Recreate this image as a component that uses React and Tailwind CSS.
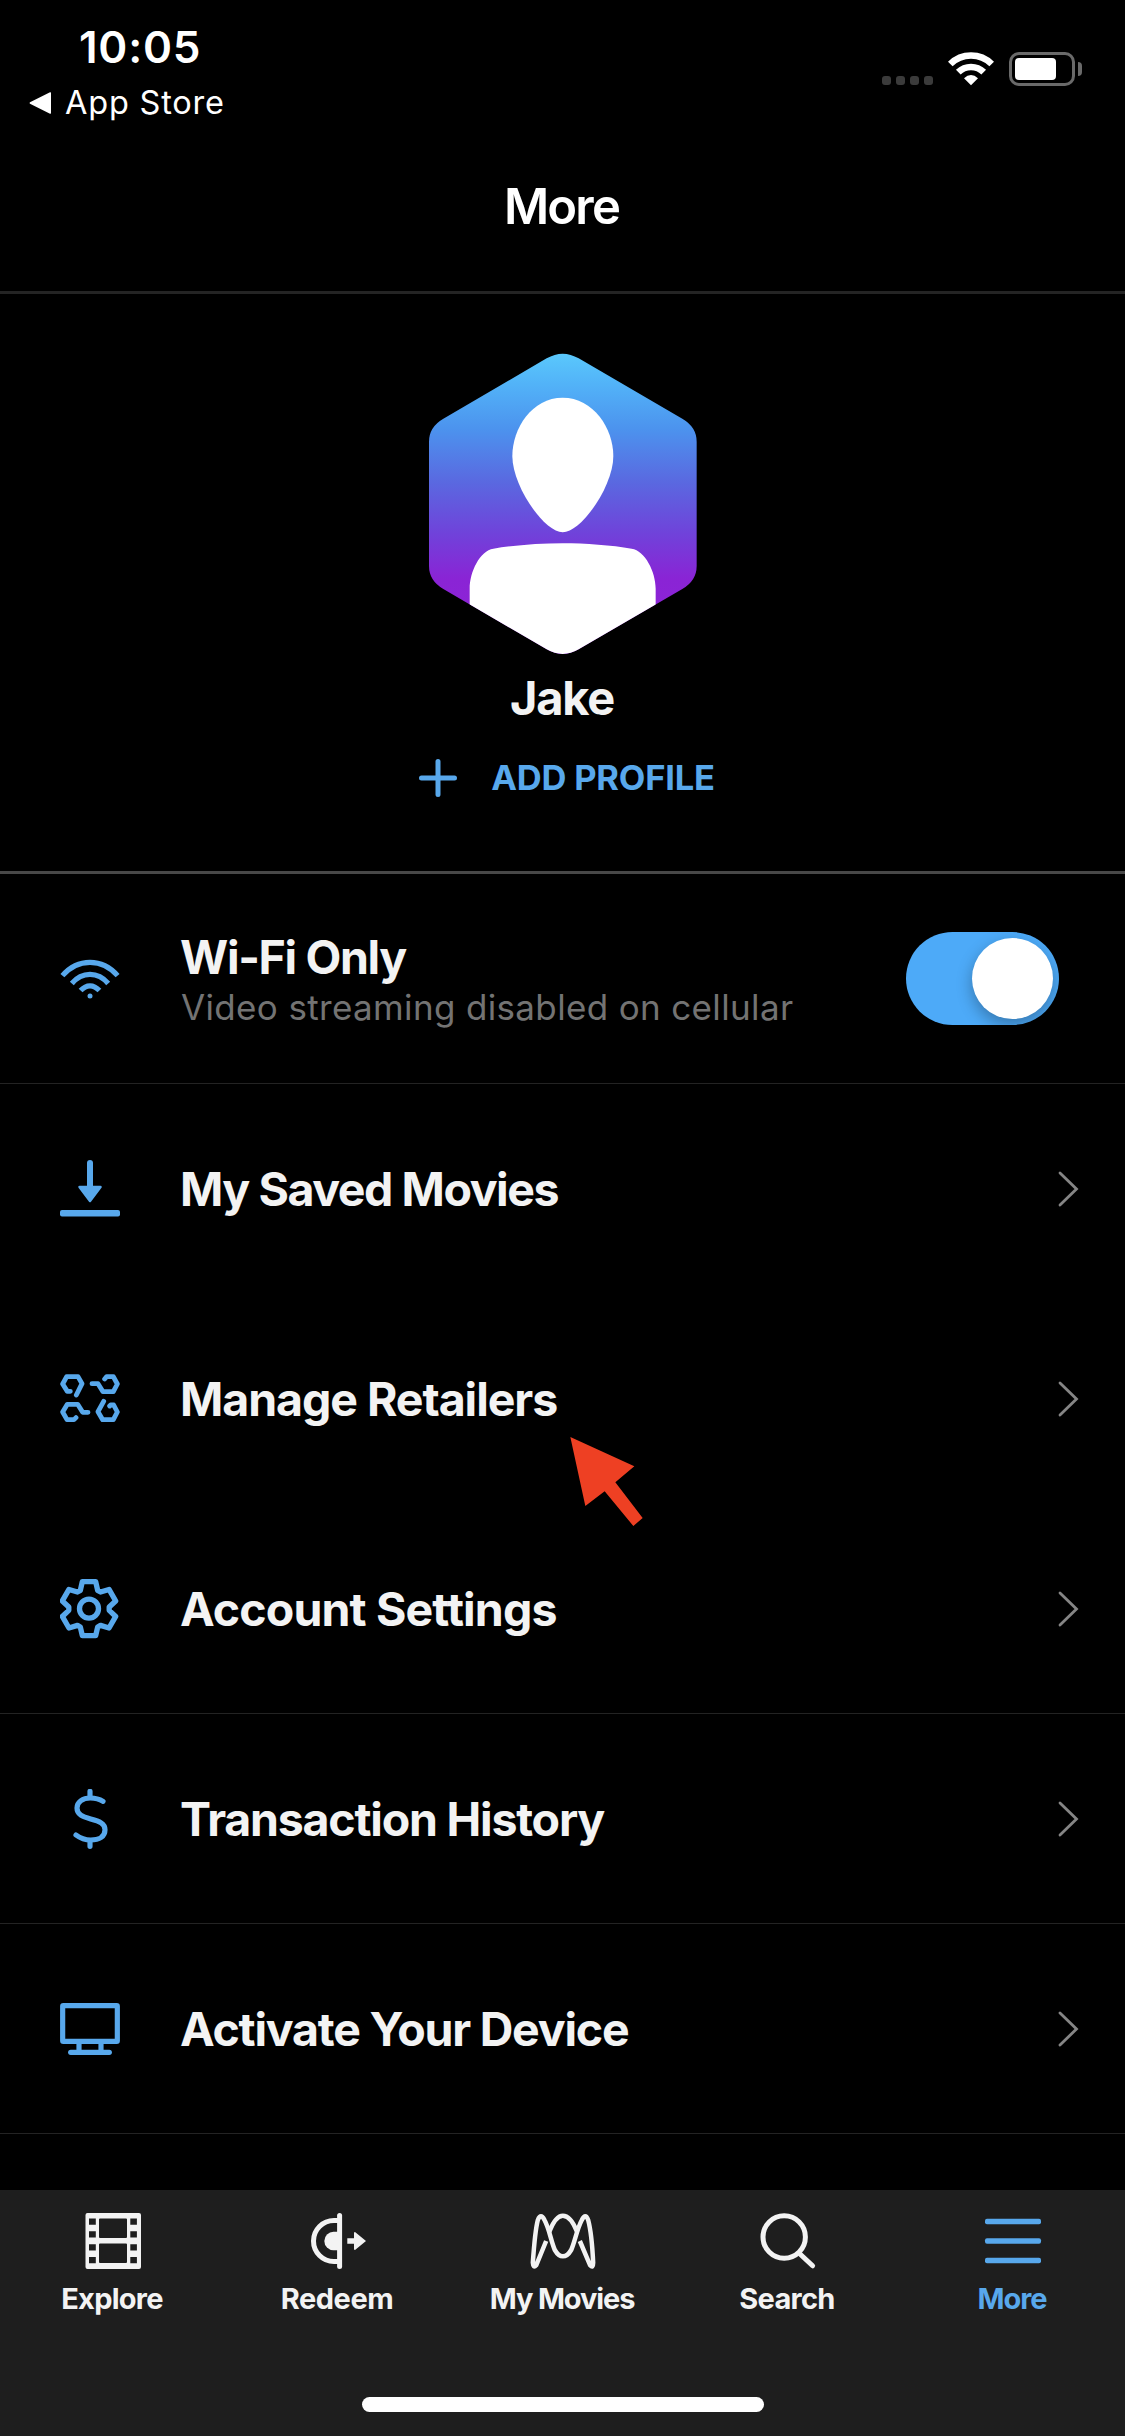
import React from "react";

function Svg({ x = 0, y = 0, w, h, sw = 5, className = "", children }) {
  return (
    <svg
      className={"block shrink-0 " + className}
      width={w}
      height={h}
      viewBox={`${x} ${y} ${w} ${h}`}
      fill="none"
      stroke="currentColor"
      strokeWidth={sw}
      strokeLinecap="round"
      strokeLinejoin="round"
    >
      {children}
    </svg>
  );
}

/* ---------- list icons, all 60px wide ---------- */

const WifiIcon = () => (
  <Svg x={60} y={949} w={60} h={60}>
    <g strokeLinecap="butt">
      <path d="M62.4 975.6 Q74 962.3 90 962.3 T117.6 975.6" strokeWidth="5.2" />
      <path d="M71.8 983.5 Q79.5 974.4 90 974.4 T108.2 983.5" strokeWidth="5.2" />
      <path d="M80.6 990.6 Q85 985.8 90 985.8 T99.4 990.6" strokeWidth="5.2" />
    </g>
    <circle cx="90" cy="996" r="2.5" fill="currentColor" stroke="none" />
  </Svg>
);

const DownloadIcon = () => (
  <Svg x={60} y={1158} w={60} h={60}>
    <path d="M90 1163 V1188" strokeWidth="6" />
    <path d="M79.5 1187 H100.5 L90 1201 Z" fill="currentColor" strokeWidth="2.5" />
    <rect x="60" y="1210" width="60" height="6.4" rx="2" fill="currentColor" stroke="none" />
  </Svg>
);

const RetailersIcon = () => (
  <Svg w={60} h={50}>
    <g transform="translate(-60 -43) scale(0.33333)" strokeWidth="14.5">
      <path d="M229 195 L246 161 L234 140 H200 L188 162 L202 184 H211" />
      <path d="M276 161 H294 L309 185 H340 L352 162 L340 140 H320 L314 147" />
      <path d="M264 247 H248 L233 223 H202 L188 246 L201 269 H222 L228 263" />
      <path d="M311 214 L294 245 L308 269 H340 L352 246 L341 225 H332 L329 228" />
    </g>
  </Svg>
);

const gearPath = (() => {
  const tooth = [[-26, 55], [-20, 81], [20, 81], [26, 55]];
  const points = [];
  for (let k = 0; k < 6; k++) {
    const a = (k * Math.PI) / 3;
    for (const [u, v] of tooth) {
      const px = u * Math.cos(a) + v * Math.sin(a);
      const py = u * Math.sin(a) - v * Math.cos(a);
      points.push(`${px.toFixed(1)} ${py.toFixed(1)}`);
    }
  }
  return "M" + points.join(" L") + " Z";
})();

const GearIcon = () => (
  <Svg w={60} h={61} className="-mb-px">
    <g transform="translate(29 30.7) scale(0.33333)" strokeWidth="16">
      <path d={gearPath} />
      <circle r="28.5" />
    </g>
  </Svg>
);

const DollarIcon = () => (
  <Svg w={60} h={60} className="mt-[2px]">
    <g transform="translate(-60 -69) scale(0.33333)" strokeWidth="15.5">
      <path d="M309 244 C298 237 285 234 271 234 C248 234 231 246 231 264 C231 284 248 290 272 297 C298 304 315 310 315 329 C315 350 298 360 272 360 C254 360 240 354 228 345" />
      <path d="M270 214 V230 M270 364 V379" />
    </g>
  </Svg>
);

const MonitorIcon = () => (
  <Svg w={60} h={52} className="mt-[2px]">
    <g transform="translate(-60 -283) scale(0.33333)" strokeWidth="15.5">
      <rect x="188" y="857" width="164" height="107" rx="2" />
      <path d="M237 970 V992 M303 970 V992" strokeLinecap="butt" />
      <path d="M212 997 H328" />
    </g>
  </Svg>
);

const Chevron = () => (
  <Svg x={1057} y={1170} w={22} h={38} sw={2.8} className="mt-px text-[#858585]">
    <path d="M1060 1173 L1076.5 1189 L1060 1205" strokeLinejoin="miter" />
  </Svg>
);

/* ---------- avatar ---------- */

const HEX =
  "M500 115 Q548 87 596 115 L907 296 Q950 321 950 365 V738 Q950 782 907 807 L596 988 Q548 1016 500 988 L190 807 Q147 782 147 738 V365 Q147 321 190 296 Z";

const Avatar = () => (
  <svg className="block" width="268" height="302" viewBox="147 99 804 906">
    <defs>
      <linearGradient id="sky" x1="0" y1="101" x2="0" y2="1002" gradientUnits="userSpaceOnUse">
        <stop offset="0" stopColor="#5ac8fc" />
        <stop offset="0.1" stopColor="#52b3f8" />
        <stop offset="0.25" stopColor="#4c93ee" />
        <stop offset="0.43" stopColor="#5a68e0" />
        <stop offset="0.6" stopColor="#7042da" />
        <stop offset="0.75" stopColor="#8a24d5" />
        <stop offset="1" stopColor="#9022d8" />
      </linearGradient>
      <clipPath id="hex">
        <path d={HEX} />
      </clipPath>
    </defs>
    <path d={HEX} fill="url(#sky)" />
    <g clipPath="url(#hex)" fill="#fff">
      <path d="M548 233 C640 233 700 325 700 408 C700 500 603 637 548 637 C494 637 397 500 397 408 C397 325 456 233 548 233 Z" />
      <path d="M269 1010 V806 C269 755 300 692 340 686 C400 676 480 670 548 670 S695 676 755 686 C795 692 827 755 827 806 V1010 Z" />
    </g>
  </svg>
);

/* ---------- tab icons, 60px tall ---------- */

const FilmIcon = () => (
  <Svg x={83} y={2211} w={60} h={60}>
    <path
      fill="currentColor"
      stroke="none"
      fillRule="evenodd"
      d="M87.5 2213 H139 Q141 2213 141 2215 V2267 Q141 2269 139 2269 H87.5 Q85.5 2269 85.5 2267 V2215 Q85.5 2213 87.5 2213 Z
         M100 2218.5 Q99 2218.5 99 2219.5 V2237 Q99 2238 100 2238 H126 Q127 2238 127 2237 V2219.5 Q127 2218.5 126 2218.5 Z
         M100 2243.5 Q99 2243.5 99 2244.5 V2262 Q99 2263 100 2263 H126 Q127 2263 127 2262 V2244.5 Q127 2243.5 126 2243.5 Z
         M89 2218.5 h6.8 v6.2 h-6.8 Z M89 2231.2 h6.8 v6.2 h-6.8 Z M89 2244.2 h6.8 v6.2 h-6.8 Z M89 2257 h6.8 v6.2 h-6.8 Z
         M130.3 2218.5 h6.6 v6.2 h-6.6 Z M130.3 2231.2 h6.6 v6.2 h-6.6 Z M130.3 2244.2 h6.6 v6.2 h-6.6 Z M130.3 2257 h6.6 v6.2 h-6.6 Z"
    />
  </Svg>
);

const RedeemIcon = () => (
  <Svg x={308} y={2211} w={60} h={60}>
    <path d="M339.6 2215.6 V2266.4" />
    <path d="M338 2220.5 H334 A20.5 20.5 0 0 0 334 2261.5 H338" />
    <path d="M338 2231.8 H333.5 A9.2 9.2 0 0 0 333.5 2250.2 H338 Z" fill="currentColor" stroke="none" />
    <path
      d="M347.3 2238.3 H354 V2232.5 L355 2232 L366 2241 L355 2250 L354 2249.5 V2243.7 H347.3 Z"
      fill="currentColor"
      stroke="none"
    />
  </Svg>
);

const MoviesIcon = () => (
  <Svg w={70} h={60}>
    <g transform="translate(-57.5 -21) scale(0.33333)" strokeWidth="13.5">
      <path
        strokeLinecap="butt"
        d="M227 153 L197 226 Q188 236 187 218 C190 175 194 120 202 90 Q211 68 222 90 C237 118 241 152 253 180 Q264 199 277 199 Q291 199 302 180 C314 152 319 118 334 90 Q345 68 353 90 C361 120 366 175 368 218 Q368 236 359 226 L328 153"
      />
      <path strokeLinecap="butt" d="M236 126 C248 95 261 77 277 77 C294 77 308 95 320 126" />
    </g>
  </Svg>
);

const SearchIcon = () => (
  <Svg x={758} y={2211} w={60} h={60}>
    <circle cx="784.2" cy="2237" r="21.2" />
    <path d="M800 2254 L812.6 2265.8" />
  </Svg>
);

const MenuIcon = () => (
  <Svg x={983} y={2211} w={60} h={60}>
    <g fill="currentColor" stroke="none">
      <rect x="985" y="2218.7" width="56" height="5.6" rx="2" />
      <rect x="985" y="2238.2" width="56" height="5.6" rx="2" />
      <rect x="985" y="2257.7" width="56" height="5.6" rx="2" />
    </g>
  </Svg>
);

/* ---------- page ---------- */

const rows = [
  { label: "My Saved Movies", Icon: DownloadIcon, line: false, cls: "tracking-[-1.44px]" },
  { label: "Manage Retailers", Icon: RetailersIcon, line: false, cls: "tracking-[-1.06px]" },
  { label: "Account Settings", Icon: GearIcon, line: true, cls: "tracking-[-0.86px]" },
  { label: "Transaction History", Icon: DollarIcon, line: true, cls: "tracking-[-1.22px]" },
  { label: "Activate Your Device", Icon: MonitorIcon, line: true, cls: "tracking-[-1.21px]" },
];

const tabs = [
  { label: "Explore", Icon: FilmIcon, cls: "tracking-[-0.75px]" },
  { label: "Redeem", Icon: RedeemIcon, cls: "tracking-[-0.46px]" },
  { label: "My Movies", Icon: MoviesIcon, cls: "tracking-[-1.12px]" },
  { label: "Search", Icon: SearchIcon, cls: "tracking-[-0.71px]" },
  { label: "More", Icon: MenuIcon, cls: "tracking-[-1.1px]", active: true },
];

function Row({ label, Icon, line, cls }) {
  return (
    <div
      className={
        "flex h-[210px] shrink-0 items-center border-b pr-[46px] " +
        (line ? "border-[#232323]" : "border-transparent")
      }
    >
      <div className="flex w-[180px] justify-center pb-px text-[#58a8ec]">
        <Icon />
      </div>
      <div className={"flex-1 pt-px text-[46.5px] font-bold leading-[50px] " + cls}>{label}</div>
      <Chevron />
    </div>
  );
}

function StatusBar() {
  return (
    <div className="flex h-[132px] justify-between">
      <div className="pt-[23px]">
        <div className="pl-[79px] text-[44px] font-semibold leading-[48px] tracking-[0.75px]">10:05</div>
        <div className="flex items-center gap-[14px] pt-[11px] pl-[29px]">
          <svg width="22" height="22" viewBox="0 0 22 22" fill="currentColor">
            <path d="M21 0.3 Q22 0 22 1 V21 Q22 22 21 21.7 L1 11.8 Q0 11 1 10.2 Z" />
          </svg>
          <span className="pt-px text-[32.5px] leading-[40px] tracking-[0.79px]">App Store</span>
        </div>
      </div>
      <div className="flex pr-[43px] pt-[52px]">
        <div className="flex gap-[5px] pt-[24px]">
          {[0, 1, 2, 3].map((i) => (
            <div key={i} className="size-[9px] rounded-[3px] bg-[#3b3b3b]" />
          ))}
        </div>
        <svg className="ml-[15px]" width="46" height="34" viewBox="948 52 46 34" fill="none" stroke="#fff">
          <path d="M950.3 64 A29.5 29.5 0 0 1 991.7 64" strokeWidth="6.6" />
          <path d="M958.3 72.2 A18 18 0 0 1 983.7 72.2" strokeWidth="6.6" />
          <path d="M964 78.3 Q971 71.8 978 78.3 L971 85.3 Z" fill="#fff" stroke="none" />
        </svg>
        <div className="ml-[15px] h-[34px] w-[66px] rounded-[10px] border-3 border-[#6a6a6a] p-[3px]">
          <div className="h-[22px] w-[41px] rounded-[4px] bg-white" />
        </div>
        <div className="ml-[3px] mt-[10px] h-[14px] w-[4px] rounded-r-full bg-[#6a6a6a]" />
      </div>
    </div>
  );
}

export default function App() {
  return (
    <div className="relative flex h-[2436px] w-[1125px] flex-col overflow-hidden bg-black font-['Inter',sans-serif] text-[#f3f3f3]">
      <header className="h-[294px] shrink-0 border-b-3 border-[#242424] text-white">
        <StatusBar />
        <h1 className="pt-[51px] pr-[2px] text-center text-[49px] font-semibold leading-[48px] tracking-[-1.8px]">More</h1>
      </header>

      <section className="flex h-[580px] shrink-0 flex-col items-center border-b-3 border-[#484848] pt-[59px]">
        <Avatar />
        <div className="mt-[18px] pr-[1px] text-[47px] font-bold leading-[50px] tracking-[-1.25px]">Jake</div>
        <div className="mt-[36px] flex items-center gap-[34px] pl-[9px] text-[#58a8ec]">
          <Svg w={38} h={38}>
            <path d="M19 2.5 V35.5 M2.5 19 H35.5" />
          </Svg>
          <span className="text-[34.5px] font-bold leading-[38px] tracking-[-0.2px]">ADD PROFILE</span>
        </div>
      </section>

      <div className="flex h-[210px] shrink-0 items-center border-b border-[#232323] pr-[66px]">
        <div className="flex w-[180px] justify-center pt-px text-[#58a8ec]">
          <WifiIcon />
        </div>
        <div className="flex-1 pt-[7px]">
          <div className="text-[46.5px] font-bold leading-[50px] tracking-[-1.35px]">Wi-Fi Only</div>
          <div className="pl-px text-[35px] leading-[50px] tracking-[0.35px] text-[#737373]">
            Video streaming disabled on cellular
          </div>
        </div>
        <div className="flex h-[93px] w-[153px] items-center justify-end rounded-full bg-[#4daaf8] p-[6px]">
          <div className="size-[81px] rounded-full bg-white shadow-[0_6px_16px_rgba(0,0,0,0.3)]" />
        </div>
      </div>

      {rows.map((r) => (
        <Row key={r.label} {...r} />
      ))}

      <nav className="mt-auto flex h-[246px] shrink-0 flex-col justify-between bg-[#1e1e1e] pb-[24px] pt-[21px]">
        <div className="grid grid-cols-5">
          {tabs.map(({ label, Icon, active, cls }) => (
            <div key={label} className={"flex flex-col items-center gap-[8px] " + (active ? "text-[#58a8ec]" : "")}>
              <Icon />
              <span className={"pr-[1px] text-[29px] font-bold leading-[40px] " + cls}>{label}</span>
            </div>
          ))}
        </div>
        <div className="h-[15px] w-[402px] self-center rounded-full bg-white" />
      </nav>

      {/* pointer resting over the Manage Retailers row */}
      <svg className="absolute left-[570px] top-[1437px]" width="74" height="90" viewBox="720 321 222 270" fill="#ee4023">
        <path d="M721 321 L913 409 L856 457 L938 564 L910 588 L824 484 L766 528 Z" />
      </svg>
    </div>
  );
}
